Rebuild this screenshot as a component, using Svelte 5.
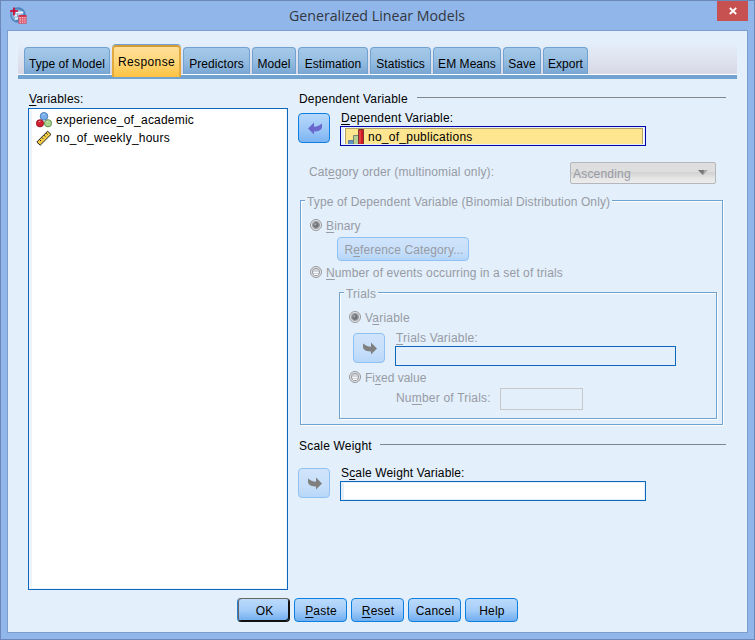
<script lang="ts">
	interface Tab {
		label: string;
		width: number;
	}

	const tabs: Tab[] = [
		{ label: 'Type of Model', width: 86 },
		{ label: 'Response', width: 69 },
		{ label: 'Predictors', width: 67 },
		{ label: 'Model', width: 44 },
		{ label: 'Estimation', width: 70 },
		{ label: 'Statistics', width: 61 },
		{ label: 'EM Means', width: 68 },
		{ label: 'Save', width: 38 },
		{ label: 'Export', width: 45 }
	];

	// `key` is the mnemonic letter, underlined at the start of the label.
	const actions = [
		{ key: '', rest: 'OK' },
		{ key: 'P', rest: 'aste' },
		{ key: 'R', rest: 'eset' },
		{ key: '', rest: 'Cancel' },
		{ key: '', rest: 'Help' }
	];

	let active = $state('Response');
	let response = $state('binary');
	let trials = $state('variable');
</script>

{#snippet arrow(back: boolean)}
	<svg class="arrow" class:arrow--back={back} width="14" height="13" viewBox="0 0 14 13">
		<path d="M0 1.5 L3 3.6 Q5 4.8 8 4.6 V.5 L14 6.5 L8 12.6 V9.6 Q1 9.4 0 5.5 Z" />
	</svg>
{/snippet}

{#snippet radio(checked: boolean)}
	<svg class="radio" width="13" height="13" viewBox="0 0 13 13">
		<circle cx="6" cy="6" r="5.5" fill="#e9ebee" stroke="#94979b" stroke-width="1" />
		<circle cx="6" cy="6" r="3.7" fill="#d2d5d9" stroke="#9a9da2" stroke-width="1" />
		{#if checked}
			<circle cx="6" cy="6" r="2.9" fill="#707377" />
			<circle cx="5.3" cy="5.3" r="1" fill="#b4b7bb" />
		{:else}
			<path d="M3.5 6.5h5M4 8.5h4" stroke="#f7f8fa" />
		{/if}
	</svg>
{/snippet}

<div class="window">
	<header class="titlebar">
		<svg class="appicon" width="17" height="17" viewBox="0 0 17 17">
			<circle cx="8" cy="8" r="7.8" fill="#4d83bd" />
			<path d="M2 4Q8 0 14 5L13 8L5 14Q0 10 2 4" fill="#83add6" />
			<path d="M6 4.5h7v2H6zM4 7.5h3v2H4zM8 7.5h3v1H8zM5 10.5h3v2H5z" fill="#eff6fc" />
			<path d="M0 4h8M4 .5v8" stroke="#d4002b" stroke-width="1.6" />
			<path d="M9 9h7v7H9z" fill="#f6cbd3" />
			<path d="M8.5 9h8" stroke="#d02f4b" stroke-width="2" />
			<path
				d="M9 9v7.5M11.4 9v7.5M13.8 9v7.5M16 9v7.5M8.5 11.8h8M8.5 14h8M8.5 16.2h8"
				stroke="#d84a62"
				stroke-width=".9"
			/>
		</svg>
		<h1 class="title">Generalized Linear Models</h1>
		<button class="close" aria-label="Close">
			<svg width="8" height="8" viewBox="0 0 8 8">
				<path d="M.8 1L7.2 7M7.2 1L.8 7" stroke="#fff" stroke-width="1.8" />
			</svg>
		</button>
	</header>

	<div class="client">
		<nav class="tabs">
			{#each tabs as tab (tab.label)}
				<button
					class="tab"
					class:tab--active={tab.label === active}
					style="width: {tab.width}px"
					onclick={() => (active = tab.label)}
				>
					{tab.label}
				</button>
			{/each}
		</nav>

		<main class="panes">
			<section class="variables">
				<div class="label"><u>V</u>ariables:</div>
				<ul class="list">
					<li>
						<svg width="16" height="16" viewBox="0 0 16 16">
							<circle cx="8" cy="4.3" r="3.8" fill="#76aee9" stroke="#4c80bb" />
							<circle cx="4" cy="11.3" r="3.6" fill="#cf1f32" stroke="#9d1825" />
							<circle cx="12" cy="11.3" r="3.6" fill="#a9d28c" stroke="#65944f" />
							<path d="M6.5 3l2-1M2.5 10l2-1M10.5 10l2-1" stroke="#fff" stroke-opacity=".55" />
						</svg>
						experience_of_academic
					</li>
					<li>
						<svg width="16" height="16" viewBox="0 0 16 16">
							<path d="M.8 12L11.6 1.2L15 4.4L4.2 15.2Z" fill="#f3ce45" stroke="#222" />
							<path d="M3.6 9.6l1.4 1.4M5.8 7.4l1.4 1.4M8 5.2l1.4 1.4M10.2 3l1.4 1.4" stroke="#222" />
						</svg>
						no_of_weekly_hours
					</li>
				</ul>
			</section>

			<section class="settings">
				<div class="heading"><span>Dependent Variable</span></div>
				<div class="pick">
					<button class="move" aria-label="Remove dependent variable">{@render arrow(true)}</button>
					<div class="field">
						<div class="label"><u>D</u>ependent Variable:</div>
						<div class="box box--focus">
							<div class="chosen">
								<svg width="16" height="15" viewBox="0 0 16 15">
									<path d="M.5 15v-3.5h5V15" fill="#5e94c8" stroke="#5b7792" />
									<path d="M5.5 15V6.5h5V15" fill="#b4cf93" stroke="#74806a" />
									<path d="M10.5 15V.5h5V15" fill="#d01a1f" stroke="#7c3434" />
									<path d="M12 1.5v13" stroke="#f06a6a" />
								</svg>
								no_of_publications
							</div>
						</div>
					</div>
				</div>

				<div class="order">
					<span class="label">Cat<u>e</u>gory order (multinomial only):</span>
					<button class="combo" disabled>
						Ascending
						<svg width="10" height="5" viewBox="0 0 10 5">
							<path d="M0 0h10L5 5Z" fill="#aaa" />
							<path d="M0 0h6L5 5Z" fill="#777" />
						</svg>
					</button>
				</div>

				<fieldset class="group">
					<legend>Type of Dependent Variable (Binomial Distribution Only)</legend>
					<div class="option">
						{@render radio(response === 'binary')}
						<span><u>B</u>inary</span>
					</div>
					<button class="button button--reference" disabled>R<u>e</u>ference Category...</button>
					<div class="option">
						{@render radio(response === 'events')}
						<span><u>N</u>umber of events occurring in a set of trials</span>
					</div>

					<fieldset class="group group--trials">
						<legend>Trials</legend>
						<div class="option">
							{@render radio(trials === 'variable')}
							<span>V<u>a</u>riable</span>
						</div>
						<div class="pick pick--trials">
							<button class="move" disabled aria-label="Set trials variable">
								{@render arrow(false)}
							</button>
							<div class="field">
								<div class="label"><u>T</u>rials Variable:</div>
								<div class="box box--off"></div>
							</div>
						</div>
						<div class="option option--fixed">
							{@render radio(trials === 'fixed')}
							<span>Fi<u>x</u>ed value</span>
						</div>
						<div class="count">
							<span class="label">Nu<u>m</u>ber of Trials:</span>
							<div class="number"></div>
						</div>
					</fieldset>
				</fieldset>

				<div class="heading heading--scale"><span>Scale Weight</span></div>
				<div class="pick pick--scale">
					<button class="move" disabled aria-label="Set scale weight variable">
						{@render arrow(false)}
					</button>
					<div class="field">
						<div class="label">S<u>c</u>ale Weight Variable:</div>
						<div class="box"></div>
					</div>
				</div>
			</section>
		</main>

		<footer class="actions">
			{#each actions as action, i (action.rest)}
				<button class="button" class:button--default={i === 0}>
					{#if action.key}<u>{action.key}</u>{/if}{action.rest}
				</button>
			{/each}
		</footer>
	</div>
</div>

<style>
	.window,
	.window * {
		box-sizing: border-box;
	}

	.window {
		display: flex;
		flex-direction: column;
		width: 755px;
		height: 640px;
		padding: 0 6px 6px;
		border: 1px solid #6b88b8;
		background: #91b6ea;
		color: #000;
		font: 12px/14px 'Liberation Sans', Arial, sans-serif;
		letter-spacing: 0.2px;
		white-space: nowrap;
	}

	button {
		padding: 0;
		font: inherit;
		letter-spacing: inherit;
		color: inherit;
	}

	svg {
		display: block;
		flex: none;
	}

	u {
		text-decoration: underline 1px;
		text-underline-offset: 2px;
		text-decoration-skip-ink: none;
	}

	/* Title bar */
	.titlebar {
		display: flex;
		flex: none;
		align-items: flex-start;
		height: 29px;
	}

	.appicon {
		margin: 6px 0 0 3px;
	}

	.title {
		flex: 1;
		margin: 5px 0 0 10px;
		font: 14.2px/20px 'Open Sans', sans-serif;
		letter-spacing: 0;
		text-align: center;
		color: #333841;
	}

	.close {
		display: flex;
		align-items: center;
		justify-content: center;
		width: 31px;
		height: 20px;
		border: 0;
		background: #c75050;
	}

	.client {
		flex: 1;
		padding: 12px 10px 0;
		border: 1px solid #7b9dcc;
		background: #e3effb;
	}

	/* Tabs */
	.tabs {
		display: flex;
		align-items: flex-start;
		gap: 2px;
		height: 36px;
		padding: 4px 0 0 6px;
		border-bottom: 4px solid #72a3d0;
		background: linear-gradient(#e4effb, #d9d8e5 30px, #d9d8e5 31px, #fff 31px);
	}

	.tab {
		height: 27px;
		padding-top: 6px;
		border: 1px solid #6fa1d2;
		border-bottom: 0;
		border-radius: 4px 4px 0 0;
		background: linear-gradient(#a5c9e8, #98bfe2 45%, #78a6d3);
		letter-spacing: 0.05px;
	}

	.tab--active {
		height: 32px;
		margin-top: -2px;
		padding-top: 0;
		border: 2px solid #e2a93e;
		border-top-color: #d29a3b;
		border-bottom: 0;
		box-shadow: 0 -1px 0 #6fa1d2;
		background: linear-gradient(#ffe09a, #ffd779 50%, #fdc241);
		letter-spacing: 0.4px;
	}

	/* Two panes */
	.panes {
		display: flex;
		gap: 10px;
		padding: 13px 0 0 10px;
	}

	.variables {
		width: 260px;
	}

	.variables .label {
		padding-left: 1px;
	}

	.list {
		height: 482px;
		margin: 2px 0 0;
		padding: 2px 0 0 4px;
		border: 1px solid #0d68bc;
		background: #fff;
		box-shadow:
			inset 3px 0 0 #edf4fc,
			inset -1px -1px 0 #edf4fc;
		list-style: none;
	}

	.list li {
		display: flex;
		align-items: center;
		gap: 4px;
		height: 18px;
		padding-left: 3px;
		letter-spacing: 0.21px;
	}

	.settings {
		width: 428px;
	}

	.heading {
		display: flex;
		gap: 9px;
		height: 14px;
		padding-left: 1px;
	}

	.heading::after {
		content: '';
		flex: 1;
		height: 1px;
		margin-top: 5px;
		background: #7f868e;
	}

	.heading--scale {
		gap: 8px;
		margin-top: 14px;
	}

	.pick {
		display: flex;
		gap: 10px;
		margin-top: 5px;
	}

	.pick--scale {
		margin-top: 13px;
	}

	.pick--scale .label {
		letter-spacing: 0.15px;
	}

	.move {
		display: flex;
		align-items: center;
		justify-content: center;
		width: 32px;
		height: 30px;
		margin-top: 2px;
		border: 1px solid #0c7fe0;
		border-radius: 4px;
		background: linear-gradient(#b7d8fb, #9bc7f7 55%, #7bb3f2);
	}

	.move:disabled {
		border-color: #8fc2f2;
		background: linear-gradient(#d0e4fb, #c7dffa 60%, #b8d7f9);
	}

	.arrow {
		fill: #808080;
		margin-left: 2px;
	}

	.arrow--back {
		fill: #6a68cf;
		transform: scaleX(-1);
	}

	.field {
		width: 306px;
	}

	.field .label {
		padding-left: 1px;
	}

	.box {
		height: 20px;
		margin-top: 1px;
		border: 1px solid #0d68bc;
		background: #fff;
		box-shadow:
			inset 3px 1px 0 #e3effb,
			inset -1px -1px 0 #e3effb;
	}

	.box--focus {
		padding: 1px 2px 1px 4px;
		border-color: #0000a8;
	}

	.box--off {
		background: #e3effb;
	}

	.chosen {
		display: flex;
		align-items: center;
		gap: 4px;
		height: 16px;
		padding-left: 2px;
		border: 1px solid #b3a264;
		border-bottom: 0;
		background: #fee58f;
		line-height: 18px;
		letter-spacing: 0.25px;
	}

	.order {
		display: flex;
		justify-content: space-between;
		height: 22px;
		margin: 16px 10px 0 11px;
		color: #979ba4;
	}

	.order .label {
		padding-top: 3px;
		letter-spacing: 0.13px;
	}

	.combo {
		display: flex;
		align-items: center;
		justify-content: space-between;
		width: 146px;
		padding: 2px 7px 0 2px;
		border: 1px solid #b4b8bd;
		border-radius: 2px;
		background: linear-gradient(#dedede 45%, #d2d2d2 45%, #d6d6d6 55%, #e6e6e6 75%, #ececec);
	}

	.combo svg {
		margin-top: -4px;
	}

	/* Etched group boxes, both fully disabled here */
	.group {
		width: 423px;
		height: 230px;
		min-width: 0;
		margin: 11px 0 0 2px;
		padding: 13px 5px 0 9px;
		border: 1px solid #6ea3d1;
		box-shadow:
			1px 1px 0 #fff,
			inset 1px 1px 0 #fff;
		color: #979ba4;
		letter-spacing: 0.12px;
	}

	/* Shorter than its text, so that the frame crosses above mid-height. */
	.group legend {
		height: 11px;
		margin-left: -5px;
		padding: 0 2px;
		background: #e3effb;
	}

	.group--trials {
		width: 378px;
		height: 132px;
		margin: 7px 0 0 29px;
		letter-spacing: 0.2px;
	}

	.option {
		display: flex;
		gap: 3px;
		height: 14px;
	}

	.option--fixed {
		letter-spacing: 0;
	}

	.button {
		width: 53px;
		height: 24px;
		padding: 1px 0 0 1px;
		border: 1px solid #0c7fe0;
		border-radius: 4px;
		background: linear-gradient(#bbdafb, #a5cdf8 50%, #6fadf0);
	}

	.button--default {
		padding-left: 2px;
		border-color: #666 #111 #111 #2d7fca;
		box-shadow:
			inset 1px 0 0 #666,
			inset -1px -1px 0 #111;
	}

	.button--reference {
		display: block;
		width: 132px;
		margin: 4px 0 5px 27px;
		padding-left: 2px;
		border-color: #8fc2f2;
		background: linear-gradient(#d0e4fb, #c7dffa 60%, #b3d5f9);
		color: #979ba4;
	}

	.pick--trials {
		margin: 6px 0 5px 4px;
	}

	.pick--trials .field {
		width: 281px;
	}

	.count {
		display: flex;
		justify-content: space-between;
		width: 187px;
		margin: 3px 0 0 47px;
	}

	.count .label {
		padding-top: 3px;
	}

	.number {
		width: 83px;
		height: 22px;
		border: 1px solid #c8c8c8;
	}

	.actions {
		display: flex;
		gap: 4px;
		margin: 8px 0 0 219px;
	}
</style>
